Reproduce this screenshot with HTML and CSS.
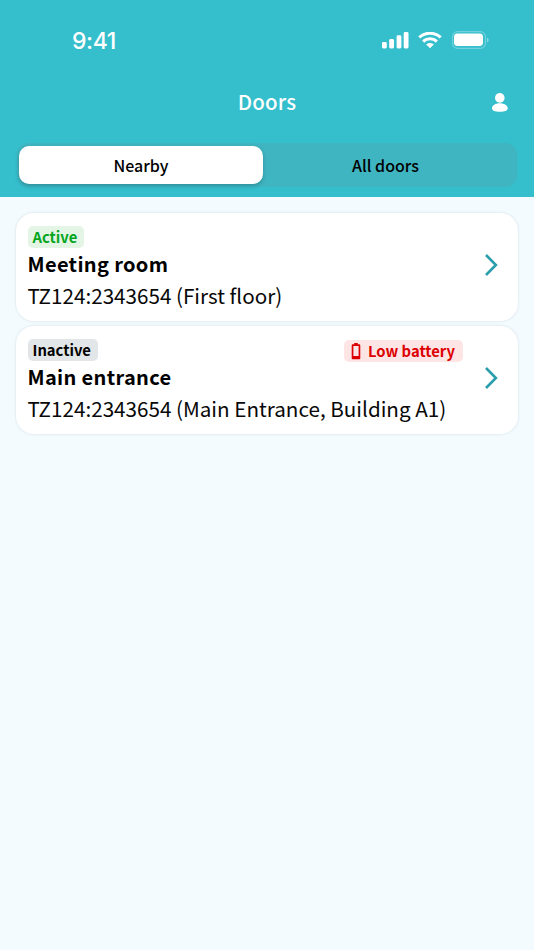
FILE: index.html
```html
<!DOCTYPE html>
<html lang="en">
<head>
<meta charset="utf-8">
<title>Doors</title>
<link rel="stylesheet" href="styles.css">
</head>
<body>
<header class="header">
  <div class="status-bar">
    <span class="time">9:41</span>
    <div class="status-icons">
      <svg class="signal" width="27" height="17" viewBox="0 0 27 17" fill="#fff"><rect x="0" y="10.1" width="4.8" height="6.4" rx="1.4"/><rect x="7.2" y="6.9" width="4.8" height="9.6" rx="1.4"/><rect x="14.6" y="3.3" width="4.8" height="13.2" rx="1.4"/><rect x="21.7" y="0" width="4.8" height="16.5" rx="1.4"/></svg>
      <svg class="wifi" width="24" height="17" viewBox="0 0 24 17" fill="none" stroke="#fff" stroke-width="3.1"><path d="M1.3 5.4C7.3-.1 16.7-.1 22.7 5.4"/><path d="M5.1 9.5C9 5.9 15 5.9 18.9 9.5"/><path d="M8.2 12.4C10.3 10.4 13.7 10.4 15.8 12.4L12 16.2Z" fill="#fff" stroke="none"/></svg>
      <svg class="battery" width="37" height="18" viewBox="0 0 37 18"><rect x=".6" y=".6" width="32.8" height="16.8" rx="5" fill="none" stroke="#fff" stroke-opacity=".3" stroke-width="1.2"/><rect x="2" y="2.5" width="29" height="12.5" rx="3.4" fill="#fff"/><path d="M35 6.5C37.2 7.4 37.2 10.6 35 11.5Z" fill="#fff" fill-opacity=".4"/></svg>
    </div>
  </div>
  <div class="title-bar">
    <h1 class="title">Doors</h1>
    <svg class="user" width="16" height="19" viewBox="0 0 16 19" fill="#fff"><circle cx="7.8" cy="4.9" r="4.8"/><path d="M7.8 10.2C12.2 10.2 15.7 12.4 15.7 15.2C15.7 17.6 12.8 18.7 7.8 18.7S0 17.6 0 15.2C0 12.4 3.4 10.2 7.8 10.2Z"/></svg>
  </div>
  <nav class="tabs">
    <div class="tab tab-selected"><span>Nearby</span></div>
    <div class="tab tab-other"><span>All doors</span></div>
  </nav>
</header>
<main class="list">
  <article class="card">
    <div class="details">
      <div class="badges"><span class="badge badge-active">Active</span></div>
      <h2 class="name">Meeting room</h2>
      <p class="location">TZ124:2343654 (First floor)</p>
    </div>
    <svg class="chevron" width="13" height="22" viewBox="0 0 13 22" fill="none" stroke="#2b9eac" stroke-width="2.6"><path d="M1 1L10.9 11L1 21"/></svg>
  </article>
  <article class="card">
    <div class="details">
      <div class="badges">
        <span class="badge badge-inactive">Inactive</span>
        <span class="badge badge-low"><svg class="cell" width="10" height="17" viewBox="0 0 10 17" fill="#dc0000"><path fill-rule="evenodd" d="M3.2 0H6.8V1.3H8.2Q9.3 1.3 9.3 2.4V15.2Q9.3 16.3 8.2 16.3H1.8Q.7 16.3 .7 15.2V2.4Q.7 1.3 1.8 1.3H3.2ZM2.4 3V13H7.6V3Z"/></svg><span>Low battery</span></span>
      </div>
      <h2 class="name">Main entrance</h2>
      <p class="location">TZ124:2343654 (Main Entrance, Building A1)</p>
    </div>
    <svg class="chevron" width="13" height="22" viewBox="0 0 13 22" fill="none" stroke="#2b9eac" stroke-width="2.6"><path d="M1 1L10.9 11L1 21"/></svg>
  </article>
</main>
</body>
</html>
```
FILE: styles.css
```css
* { box-sizing: border-box; }
body {
  margin: 0;
  min-height: 950px;
  background: #f3fbff;
  color: #080808;
  font-family: "Noto Sans CJK SC", "Noto Sans", sans-serif;
}
h1, h2, p { margin: 0; }
svg { display: block; flex: none; }
.header {
  height: 197px;
  padding: 0 17px;
  background: #35becc;
}
.status-bar {
  display: flex;
  justify-content: space-between;
  align-items: center;
  height: 80px;
  padding: 0 28px 0 55px;
}
.time {
  padding-top: 1px;
  color: #fff;
  font: 500 23px/30px Inter, sans-serif;
  letter-spacing: -0.4px;
}
.status-icons { display: flex; align-items: center; }
.wifi { margin-left: 9px; }
.battery { margin-left: 10px; }
.title-bar {
  display: grid;
  grid-template-columns: 1fr auto 1fr;
  align-items: center;
  height: 44px;
  padding-right: 9px;
  padding-left: 9px;
}
.title {
  grid-column: 2;
  padding-bottom: 2px;
  color: #fff;
  font-size: 20.5px;
  font-weight: 500;
  line-height: 30px;
  letter-spacing: 0.2px;
}
.user { justify-self: end; }
.tabs {
  display: grid;
  grid-template-columns: 246px 1fr;
  height: 44px;
  margin-top: 19px;
  padding: 3px 2px;
  border-radius: 12px;
  background: #3fb5c1;
}
.tab {
  display: flex;
  align-items: center;
  justify-content: center;
  height: 38px;
  border-radius: 10px;
  color: #000;
  font-size: 16px;
  font-weight: 500;
  line-height: 24px;
}
.tab-selected {
  margin-right: 2px;
  background: #fff;
  box-shadow: 0 2px 4px rgba(0, 60, 70, .3);
}
.tab-other { padding-right: 9px; }
.list {
  display: flex;
  flex-direction: column;
  gap: 5px;
  padding: 16px;
}
.card {
  display: flex;
  align-items: flex-start;
  justify-content: space-between;
  height: 108px;
  padding: 13px 20px 0 11.5px;
  border-radius: 18px;
  background: #fff;
  box-shadow: 0 0 2px 1px rgba(50, 70, 80, .08);
}
.details { width: 435.5px; }
.chevron { margin-top: 28px; }
.badges {
  display: flex;
  justify-content: space-between;
  align-items: flex-start;
  height: 22px;
}
.badge {
  display: flex;
  align-items: center;
  height: 22px;
  padding: 0 7px 0 5px;
  border-radius: 5px;
  font-size: 14.8px;
  font-weight: 700;
  line-height: 22px;
}
.badge-active { background: #e4f5e6; color: #04a61d; }
.badge-inactive { background: #e3e6e8; color: #000; }
.badge-low {
  gap: 7px;
  margin-top: 1px;
  padding: 0 8px 0 7px;
  background: #fde5e5;
  color: #dc0000;
}
.name {
  color: #000;
  font-size: 20px;
  font-weight: 700;
  line-height: 32px;
  letter-spacing: 0.35px;
}
.location {
  font-size: 20.65px;
  line-height: 30px;
  white-space: nowrap;
}
```
